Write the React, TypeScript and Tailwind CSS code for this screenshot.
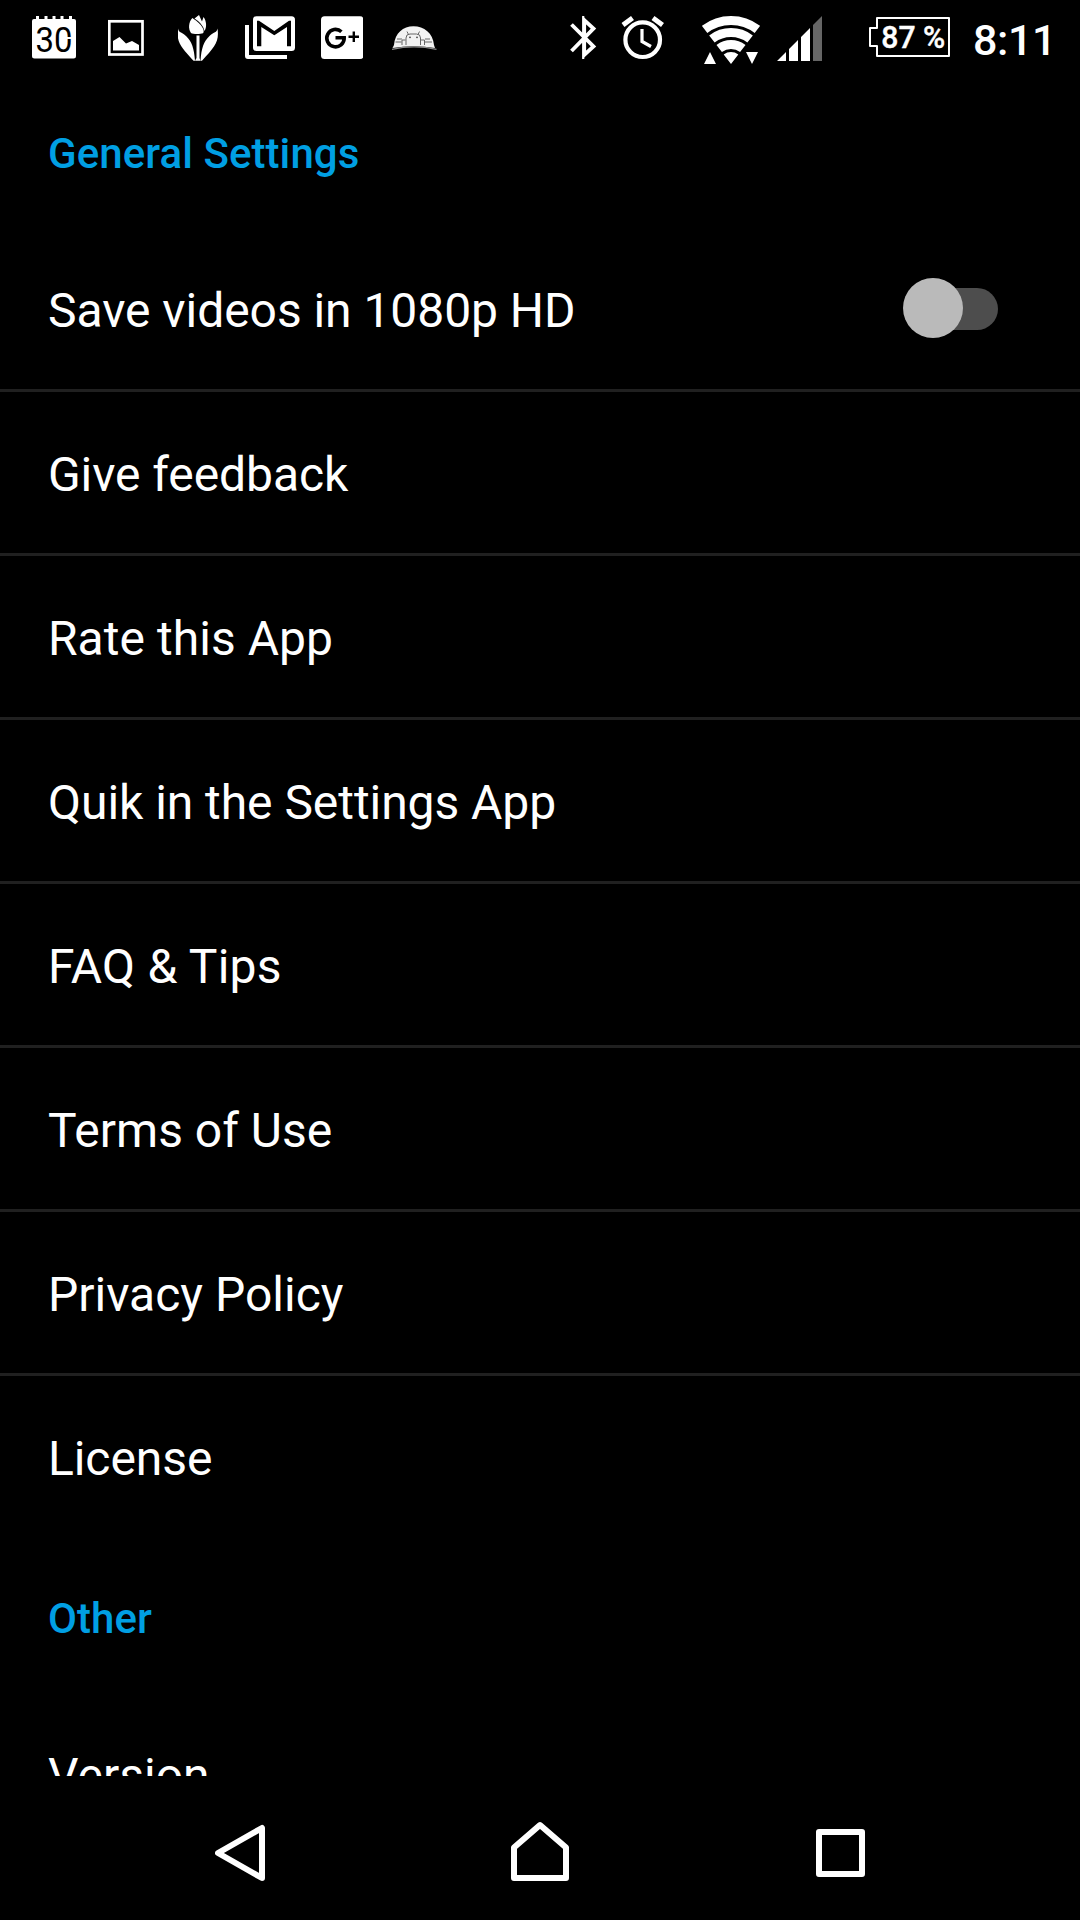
import React from 'react';

const items = [
  { label: 'Give feedback', tracking: 'tracking-[-0.08px]' },
  { label: 'Rate this App', tracking: 'tracking-[0.04px]' },
  { label: 'Quik in the Settings App', tracking: 'tracking-[-0.05px]' },
  { label: 'FAQ & Tips', tracking: 'tracking-[0.24px]' },
  { label: 'Terms of Use' },
  { label: 'Privacy Policy' },
];

const StatusBar: React.FC = () => {
  return (
    <div className="flex h-[72px] shrink-0 text-white">
      {/* Calendar */}
      <svg className="ml-8 h-[72px] w-11" viewBox="32 0 44 72" fill="none">
        <path
          d="M34 19H36V16H39V19H44.500V16H47.500V19H52.500V16H55.500V19H60.500V16H63.500V19H69V16H72V19H74Q76 19 76 21V56Q76 58.500 73.500 58.500H34.500Q32 58.500 32 56V21Q32 19 34 19Z"
          fill="white"
        />
        <text x="35.500" y="52" fontFamily="Roboto, sans-serif" fontSize="35" textLength="37" lengthAdjust="spacingAndGlyphs" fill="black">30</text>
        <path d="M66 37H72V39H66Z" fill="white" />
      </svg>

      {/* Picture */}
      <svg className="ml-8 h-[72px] w-9" viewBox="108 0 36 72" fill="none">
        <rect x="109.300" y="21.300" width="33.200" height="33.200" stroke="white" strokeWidth="2.700" />
        <path d="M113 50.500V41L119.500 37L126 43.500L132 41L139 45V50.500Z" fill="white" />
      </svg>

      {/* Tulip */}
      <svg className="ml-[34px] h-[72px] w-10" viewBox="178 0 40 72" fill="white">
        <path d="M192.300 18C188.500 22 188 29 191 33C193 34.300 200 34.300 203 33.300C205 31 203 25 192.300 18Z" />
        <path d="M194.500 18.500L199 15L202 21.500L203.500 17C206.500 21 207 27 204.500 31C203.500 26 199.500 21.500 194.500 18.500Z" />
        <path d="M178 28.500C179 33 181 31.500 186 36C192 42 194 48 195 60.800H193.500C181 47 176 42 178 28.500Z" />
        <path d="M217.500 28.500C216.500 33 214.500 31.500 209.500 36C203.500 42 201.500 48 200.500 60.800H202C214.500 47 219.500 42 217.500 28.500Z" />
        <path d="M196.500 35.500H199.500V58L200.500 60.800H195L196.500 58Z" />
      </svg>

      {/* Mail */}
      <svg className="ml-[27px] h-[72px] w-[50px]" viewBox="245 0 50 72" fill="none">
        <path d="M245 25H249V55H287V59H248Q245 59 245 56Z" fill="white" />
        <rect x="253" y="16.300" width="42" height="34.700" rx="3.500" fill="white" />
        <path d="M257 46.300V20.700H259L274.300 30.900L289 20.700H291V46.300H287V27L274.300 35.300L261.300 27V46.300Z" fill="black" />
      </svg>

      {/* Google+ */}
      <svg className="ml-[26px] h-[72px] w-[42px]" viewBox="321 0 42 72" fill="none">
        <rect x="321" y="16.300" width="42.500" height="42.700" rx="3.500" fill="white" />
        <path d="M341.400 31.700A8.700 8.700 0 1 0 344.200 37.800H335.500" stroke="black" strokeWidth="3.600" />
        <path d="M348.500 36.700H359M353.800 31.500V42" stroke="black" strokeWidth="2.400" />
      </svg>

      {/* Android dome */}
      <svg className="ml-7 h-[72px] w-[46px]" viewBox="391 0 46 72" fill="none">
        <path d="M394 45C395 33 403 26.200 413.500 26.200S433 33 434 45L435 48Q413.500 44.500 392.500 48Z" fill="#f2f2f2" />
        <path d="M392 49.300Q414 44.500 436.500 49.300" stroke="#8a8a8a" strokeWidth="1.200" />
        <path
          d="M406 45V38Q406 34 410 34H416.500Q420.500 34 420.500 38V45M408.500 34.500L407 31.500M418 34.500L419.500 31.500M405.500 40H402V45M421 40H424.500V45M401.500 42H395.500M402 39H397M425 42H432M425 39H430"
          stroke="#666"
          strokeWidth="1"
        />
        <circle cx="410" cy="37.300" r="0.900" fill="#444" />
        <circle cx="417" cy="37.300" r="0.900" fill="#444" />
      </svg>

      {/* Bluetooth */}
      <svg className="ml-[133px] h-[72px] w-[27px]" viewBox="570 0 27 72" fill="none">
        <path d="M571.500 24.500L593.500 46.500L584.200 55V20L593.500 28.500L571.500 51" stroke="white" strokeWidth="3.800" />
        <path d="M583.300 16V59" stroke="white" strokeWidth="2" />
      </svg>

      {/* Alarm */}
      <svg className="ml-6 h-[72px] w-[43px]" viewBox="621 0 43 72" fill="none" stroke="white">
        <circle cx="642.700" cy="39.700" r="17.300" strokeWidth="4.200" />
        <path d="M642 29V41.500L651 46.500" strokeWidth="3.200" />
        <path d="M623 25L632.500 18M653 18L662.500 25" strokeWidth="5" />
      </svg>

      {/* Wifi */}
      <svg className="ml-[38px] h-[72px] w-[58px]" viewBox="702 0 58 72" fill="none">
        <g stroke="white" strokeWidth="9">
          <path d="M704.600 29.400A43.500 43.500 0 0 1 757.400 29.400" />
          <path d="M711.900 39A31.500 31.500 0 0 1 750.100 39" />
          <path d="M719.200 48.500A19.500 19.500 0 0 1 742.800 48.500" />
        </g>
        <path d="M731 64L723.700 54.500A12 12 0 0 1 738.300 54.500ZM710 52L716 64H704ZM746 52H758L752 64Z" fill="white" />
      </svg>

      {/* Signal */}
      <svg className="ml-[17px] h-[72px] w-[45px]" viewBox="777 0 45 72" fill="white">
        <path d="M777 61L786 52V61ZM789 49L798 40V61H789ZM801 37L810 28V61H801Z" />
        <path d="M813 25L822 16V61H813Z" fill="#666" />
      </svg>

      {/* Battery */}
      <svg className="ml-[47px] h-[72px] w-[82px]" viewBox="869 0 82 72" fill="none">
        <path d="M877 18H949V56H877V46H870V28H877Z" stroke="white" strokeWidth="2" strokeLinejoin="round" />
        <text x="881.300" y="48" fontFamily="Roboto, sans-serif" fontSize="32" fontWeight="500" textLength="64" lengthAdjust="spacingAndGlyphs" fill="white" stroke="white" strokeWidth="0.400">87 %</text>
      </svg>

      <span className="ml-[22px] mt-[7px] text-[43px] leading-[66px] font-medium tracking-[-0.4px]">8:11</span>
    </div>
  );
};

const SectionTitle: React.FC<{ children: React.ReactNode }> = ({ children }) => (
  <h2 className="flex h-[156px] shrink-0 items-center px-12 pt-[7px] text-[42px] font-medium tracking-[0.07px] text-[#009fe3]">
    {children}
  </h2>
);

interface RowProps {
  label: string;
  tracking?: string;
  last?: boolean;
  children?: React.ReactNode;
}

const Row: React.FC<RowProps> = ({ label, tracking = '', last, children }) => (
  <div
    className={
      last
        ? 'flex h-[161px] shrink-0 items-center justify-between px-12'
        : 'flex h-[164px] shrink-0 items-center justify-between border-b-[3px] border-[#202020] px-12'
    }
  >
    <span className={`pt-1 text-[48px] whitespace-nowrap text-white ${tracking}`}>{label}</span>
    {children}
  </div>
);

const App: React.FC = () => {
  return (
    <div className="flex h-[1920px] w-[1080px] flex-col overflow-hidden bg-black font-['Roboto',sans-serif]">
      <StatusBar />

      <main className="flex h-[1704px] shrink-0 flex-col overflow-hidden">
        <SectionTitle>General Settings</SectionTitle>
        <Row label="Save videos in 1080p HD" tracking="tracking-[-0.05px]">
          <div className="mr-[34px] flex h-[42px] w-[90px] items-center rounded-full bg-[#4d4d4d]">
            <div className="-mt-px -ml-[5px] size-[60px] shrink-0 rounded-full bg-[#bababa]"></div>
          </div>
        </Row>
        {items.map((item) => (
          <Row key={item.label} label={item.label} tracking={item.tracking} />
        ))}
        <Row label="License" tracking="tracking-[-0.08px]" last />

        <SectionTitle>Other</SectionTitle>
        <Row label="Version" last />
      </main>

      {/* Navigation bar */}
      <nav className="flex h-36 shrink-0">
        <svg className="ml-[215px] h-36 w-[51px]" viewBox="215 1776 51 144" fill="none" stroke="white" strokeWidth="6" strokeLinejoin="round">
          <path d="M218 1853L262 1828V1878Z" />
        </svg>
        <svg className="ml-[244px] h-36 w-[60px]" viewBox="510 1776 60 144" fill="none" stroke="white" strokeWidth="6" strokeLinejoin="round">
          <path d="M514 1878V1847.500L540 1825L566 1847.500V1878Z" />
        </svg>
        <svg className="ml-[245px] h-36 w-[51px]" viewBox="815 1776 51 144" fill="none" stroke="white" strokeWidth="6" strokeLinejoin="round">
          <path d="M819 1832H862V1874H819Z" />
        </svg>
      </nav>
    </div>
  );
};

export default App;
